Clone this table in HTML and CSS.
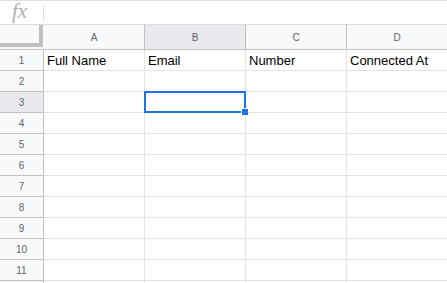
FILE: index.html
```html
<!DOCTYPE html>
<html>
<head>
<meta charset="utf-8">
<link rel="stylesheet" href="styles.css">
</head>
<body>
<div class="formula-bar">
  <div class="fx">fx</div>
  <div class="fx-sep"></div>
  <div class="fx-input"></div>
</div>
<div class="sheet">
  <div class="row head-row">
    <div class="corner"><div class="freeze"></div></div>
    <div class="col-head">A</div>
    <div class="col-head active">B</div>
    <div class="col-head">C</div>
    <div class="col-head">D</div>
  </div>
  <div class="row">
    <div class="row-head">1</div>
    <div class="cell">Full Name</div>
    <div class="cell">Email</div>
    <div class="cell">Number</div>
    <div class="cell">Connected At</div>
  </div>
  <div class="row">
    <div class="row-head">2</div>
    <div class="cell"></div><div class="cell"></div><div class="cell"></div><div class="cell"></div>
  </div>
  <div class="row">
    <div class="row-head active">3</div>
    <div class="cell"></div><div class="cell selected"><span class="handle"></span></div><div class="cell"></div><div class="cell"></div>
  </div>
  <div class="row">
    <div class="row-head">4</div>
    <div class="cell"></div><div class="cell"></div><div class="cell"></div><div class="cell"></div>
  </div>
  <div class="row">
    <div class="row-head">5</div>
    <div class="cell"></div><div class="cell"></div><div class="cell"></div><div class="cell"></div>
  </div>
  <div class="row">
    <div class="row-head">6</div>
    <div class="cell"></div><div class="cell"></div><div class="cell"></div><div class="cell"></div>
  </div>
  <div class="row">
    <div class="row-head">7</div>
    <div class="cell"></div><div class="cell"></div><div class="cell"></div><div class="cell"></div>
  </div>
  <div class="row">
    <div class="row-head">8</div>
    <div class="cell"></div><div class="cell"></div><div class="cell"></div><div class="cell"></div>
  </div>
  <div class="row">
    <div class="row-head">9</div>
    <div class="cell"></div><div class="cell"></div><div class="cell"></div><div class="cell"></div>
  </div>
  <div class="row">
    <div class="row-head">10</div>
    <div class="cell"></div><div class="cell"></div><div class="cell"></div><div class="cell"></div>
  </div>
  <div class="row">
    <div class="row-head">11</div>
    <div class="cell"></div><div class="cell"></div><div class="cell"></div><div class="cell"></div>
  </div>
  <div class="row">
    <div class="row-head"></div>
    <div class="cell"></div><div class="cell"></div><div class="cell"></div><div class="cell"></div>
  </div>
</div>
</body>
</html>
```
FILE: styles.css
```css
html, body {
  margin: 0;
  padding: 0;
  background: #fff;
  overflow: hidden;
  width: 447px;
  height: 283px;
}
body {
  font-family: Arial, "Liberation Sans", sans-serif;
}
.formula-bar {
  height: 23px;
  border-top: 1px solid #e0e0e0;
  border-bottom: 1px solid #dadce0;
  display: flex;
  align-items: center;
}
.fx {
  width: 43px;
  box-sizing: border-box;
  padding-left: 12px;
  font-family: "Liberation Serif", serif;
  font-style: italic;
  font-size: 21px;
  line-height: 20px;
  color: #b0b0b0;
  height: 20px;
  margin-top: -4px;
}
.fx-sep {
  width: 1px;
  height: 15px;
  background: #dadce0;
  margin-top: 2px;
}
.sheet {
  display: flex;
  flex-direction: column;
}
.row {
  display: flex;
  height: 21px;
  flex: none;
}
.head-row {
  height: 25px;
}
.corner {
  width: 43px;
  height: 24px;
  flex: none;
  background: #f8f9fa;
  border-right: 1px solid #fff;
  border-bottom: 1px solid #c0c0c0;
}
.freeze {
  width: 39px;
  height: 18px;
  border-right: 4px solid #c0c0c0;
  border-bottom: 4px solid #c0c0c0;
  background: #f8f9fa;
}
.col-head {
  width: 100px;
  height: 24px;
  flex: none;
  background: #f8f9fa;
  border-right: 1px solid #c0c0c0;
  border-bottom: 1px solid #c0c0c0;
  display: flex;
  align-items: center;
  justify-content: center;
  font-size: 10px;
  color: #5f6368;
}
.col-head.active,
.row-head.active {
  background: #e8eaed;
}
.row-head {
  width: 43px;
  height: 20px;
  flex: none;
  background: #f8f9fa;
  border-right: 1px solid #c0c0c0;
  border-bottom: 1px solid #c0c0c0;
  display: flex;
  align-items: center;
  justify-content: center;
  font-size: 10px;
  color: #5f6368;
}
.cell {
  width: 101px;
  height: 21px;
  flex: none;
  box-sizing: border-box;
  border-right: 1px solid #e2e3e3;
  border-bottom: 1px solid #e2e3e3;
  padding: 1px 3px 0;
  font-size: 13px;
  line-height: 20px;
  color: #000;
  white-space: nowrap;
  overflow: hidden;
  position: relative;
}
.selected {
  overflow: visible;
}
.selected::after {
  content: "";
  position: absolute;
  left: -1px;
  top: -1px;
  width: 98px;
  height: 18px;
  border: 2px solid #1a73e8;
}
.handle {
  position: absolute;
  right: -4px;
  bottom: -4px;
  width: 6px;
  height: 6px;
  background: #1a73e8;
  border: 1px solid #fff;
  z-index: 2;
}
```
